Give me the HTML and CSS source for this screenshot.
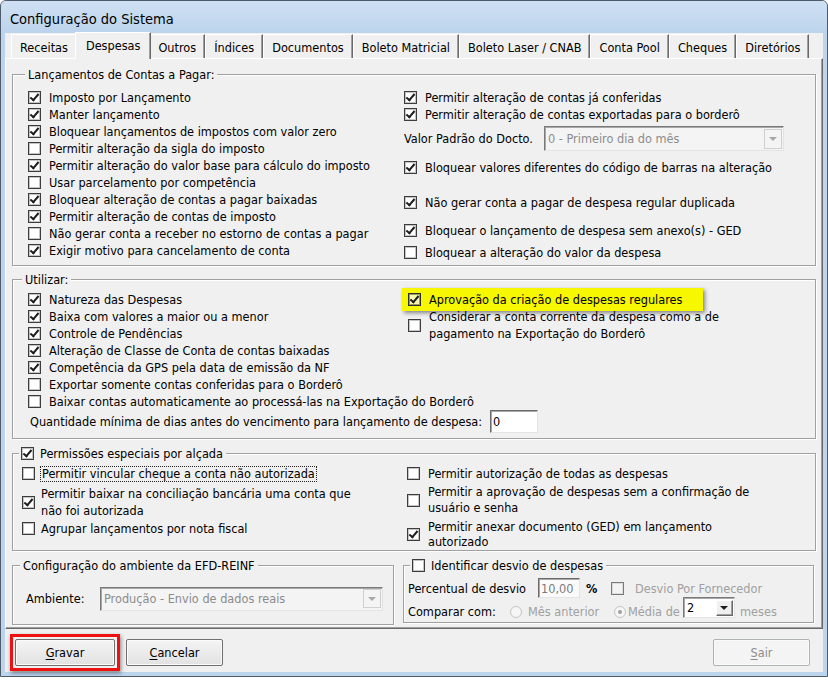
FILE: index.html
```html
<!DOCTYPE html>
<html lang="pt-BR">

<head>
    <meta charset="utf-8">
    <meta name="viewport" content="width=device-width, initial-scale=1.0">
    <title>Configuração do Sistema</title>
    <link rel="stylesheet" href="styles.css">
</head>

<body>
    <div class="window">
        <div class="titlebar">Configuração do Sistema</div>

        <div class="client">
            <nav class="tabs">
                <span class="tab">Receitas</span>
                <span class="tab active">Despesas</span>
                <span class="tab">Outros</span>
                <span class="tab">Índices</span>
                <span class="tab">Documentos</span>
                <span class="tab">Boleto Matricial</span>
                <span class="tab">Boleto Laser / CNAB</span>
                <span class="tab">Conta Pool</span>
                <span class="tab">Cheques</span>
                <span class="tab">Diretórios</span>
            </nav>

            <div class="panel">
                <!-- Lançamentos -->
                <section class="group g1">
                    <span class="legend">Lançamentos de Contas a Pagar:</span>
                    <div class="cols">
                        <div class="col c1-left">
                            <label class="row"><span class="cb on"></span>Imposto por Lançamento</label>
                            <label class="row"><span class="cb on"></span>Manter lançamento</label>
                            <label class="row"><span class="cb on"></span>Bloquear lançamentos de impostos com valor zero</label>
                            <label class="row"><span class="cb"></span>Permitir alteração da sigla do imposto</label>
                            <label class="row"><span class="cb on"></span>Permitir alteração do valor base para cálculo do imposto</label>
                            <label class="row"><span class="cb"></span>Usar parcelamento por competência</label>
                            <label class="row"><span class="cb on"></span>Bloquear alteração de contas a pagar baixadas</label>
                            <label class="row"><span class="cb on"></span>Permitir alteração de contas de imposto</label>
                            <label class="row"><span class="cb"></span>Não gerar conta a receber no estorno de contas a pagar</label>
                            <label class="row"><span class="cb on"></span>Exigir motivo para cancelamento de conta</label>
                        </div>
                        <div class="col">
                            <label class="row"><span class="cb on"></span>Permitir alteração de contas já conferidas</label>
                            <label class="row"><span class="cb on"></span>Permitir alteração de contas exportadas para o borderô</label>
                            <div class="row field-row">
                                <span class="field-label">Valor Padrão do Docto.</span>
                                <span class="select disabled wide"><span class="select-text">0 - Primeiro dia do mês</span><span class="arrow"></span></span>
                            </div>
                            <label class="row mt8"><span class="cb on"></span>Bloquear valores diferentes do código de barras na alteração</label>
                            <label class="row mt18"><span class="cb on"></span>Não gerar conta a pagar de despesa regular duplicada</label>
                            <label class="row mt11"><span class="cb on"></span>Bloquear o lançamento de despesa sem anexo(s) - GED</label>
                            <label class="row mt5"><span class="cb"></span>Bloquear a alteração do valor da despesa</label>
                        </div>
                    </div>
                </section>

                <!-- Utilizar -->
                <section class="group g2">
                    <span class="legend">Utilizar:</span>
                    <div class="cols">
                        <div class="col c2-left">
                            <label class="row"><span class="cb on"></span>Natureza das Despesas</label>
                            <label class="row"><span class="cb on"></span>Baixa com valores a maior ou a menor</label>
                            <label class="row"><span class="cb on"></span>Controle de Pendências</label>
                            <label class="row"><span class="cb on"></span>Alteração de Classe de Conta de contas baixadas</label>
                            <label class="row"><span class="cb on"></span>Competência da GPS pela data de emissão da NF</label>
                            <label class="row"><span class="cb"></span>Exportar somente contas conferidas para o Borderô</label>
                            <label class="row"><span class="cb"></span>Baixar contas automaticamente ao processá-las na Exportação do Borderô</label>
                            <div class="row qty-row">
                                <span class="qty-label">Quantidade mínima de dias antes do vencimento para lançamento de despesa:</span>
                                <span class="input">0</span>
                            </div>
                        </div>
                        <div class="col">
                            <label class="row highlight"><span class="cb on"></span>Aprovação da criação de despesas regulares</label>
                            <label class="row multi after-hl"><span class="cb"></span><span>Considerar a conta corrente da despesa como a de<br>pagamento na Exportação do Borderô</span></label>
                        </div>
                    </div>
                </section>

                <!-- Permissões -->
                <section class="group g3">
                    <span class="legend legend-cb"><span class="cb on"></span>Permissões especiais por alçada</span>
                    <div class="cols">
                        <div class="col c3-left">
                            <label class="row tight"><span class="cb"></span><span class="focus">Permitir vincular cheque a conta não autorizada</span></label>
                            <label class="row tight multi mt3"><span class="cb on"></span><span>Permitir baixar na conciliação bancária uma conta que<br>não foi autorizada</span></label>
                            <label class="row tight mt1"><span class="cb"></span>Agrupar lançamentos por nota fiscal</label>
                        </div>
                        <div class="col">
                            <label class="row"><span class="cb"></span>Permitir autorização de todas as despesas</label>
                            <label class="row multi lh16 mt2"><span class="cb"></span><span>Permitir a aprovação de despesas sem a confirmação de<br>usuário e senha</span></label>
                            <label class="row multi lh15 mt3"><span class="cb on"></span><span>Permitir anexar documento (GED) em lançamento<br>autorizado</span></label>
                        </div>
                    </div>
                </section>

                <div class="bottom-groups">
                    <section class="group g4">
                        <span class="legend">Configuração do ambiente da EFD-REINF</span>
                        <div class="row field-row">
                            <span class="amb-label">Ambiente:</span>
                            <span class="select disabled amb"><span class="select-text">Produção - Envio de dados reais</span><span class="arrow"></span></span>
                        </div>
                    </section>

                    <section class="group g5">
                        <span class="legend legend-cb"><span class="cb"></span>Identificar desvio de despesas</span>
                        <div class="row pct-row">
                            <span class="pct-label">Percentual de desvio</span>
                            <span class="input gray pct-input">10,00</span>
                            <span class="pct-sign">%</span>
                            <span class="cb off-dis"></span>
                            <span class="dis-text forn">Desvio Por Fornecedor</span>
                        </div>
                        <div class="row cmp-row">
                            <span class="cmp-label low">Comparar com:</span>
                            <span class="radio low-r"></span>
                            <span class="dis-text mes low">Mês anterior</span>
                            <span class="radio checked low-r"></span>
                            <span class="dis-text media low">Média de</span>
                            <span class="select months"><span class="select-text">2</span><span class="arrow dark"></span></span>
                            <span class="dis-text meses low">meses</span>
                        </div>
                    </section>
                </div>
            </div>

            <div class="buttons">
                <span class="mark"><span class="btn"><u>G</u>ravar</span></span>
                <span class="btn cancel"><u>C</u>ancelar</span>
                <span class="btn off sair"><u>S</u>air</span>
            </div>
        </div>
    </div>
</body>

</html>
```

FILE: styles.css
```css
body {
    margin: 0;
    padding: 0;
    background: #ffffff;
    font-family: "DejaVu Sans Condensed", "Liberation Sans", sans-serif;
    font-size: 12.6px;
    color: #000000;
}

.window {
    box-sizing: border-box;
    width: 828px;
    height: 677px;
    border: 1px solid #4d5b6b;
    border-radius: 6px 6px 0 0;
    background: #bcd4ec;
    padding: 0 4px 4px;
}

.titlebar {
    height: 32px;
    margin: 0 -4px;
    padding-left: 9px;
    line-height: 36px;
    font-size: 14.5px;
    border-radius: 5px 5px 0 0;
    background: linear-gradient(#cfe0f3, #bcd4ec);
}

.client {
    height: 639px;
    background: #f0f0f0;
    display: flex;
    flex-direction: column;
}

/* tabs */

.tabs {
    display: flex;
    align-items: flex-end;
    height: 25px;
    padding-left: 6px;
}

.tab {
    box-sizing: border-box;
    height: 24px;
    line-height: 25px;
    padding: 0 8px;
    border-top: 1px solid #ffffff;
    border-left: 1px solid #ffffff;
    border-right: 1px solid #696969;
    box-shadow: inset -1px 0 0 #a0a0a0;
    white-space: nowrap;
}

.tab.active {
    height: 27px;
    margin: 0 -2px -1px;
    padding: 0 10px;
    line-height: 26px;
    background: #f0f0f0;
    position: relative;
    z-index: 1;
}

.panel {
    box-sizing: border-box;
    height: 571px;
    border: 1px solid;
    border-color: #ffffff #696969 #696969 #ffffff;
    box-shadow: inset -1px -1px 0 #a0a0a0;
    padding: 15px 6px 0;
}

/* group boxes */

.group {
    box-sizing: border-box;
    position: relative;
    border: 1px solid #a0a0a0;
    box-shadow: inset 1px 1px 0 #ffffff, 1px 1px 0 #ffffff;
}

.legend {
    position: absolute;
    top: -9px;
    left: 12px;
    padding: 0 3px;
    line-height: 17px;
    background: #f0f0f0;
    white-space: nowrap;
}

.legend-cb {
    display: flex;
    align-items: center;
    gap: 6px;
    left: 6px;
    padding: 0 3px 0 2px;
}

.g1 {
    height: 192px;
    padding: 14px 0 0 15px;
}

.g2 {
    height: 160px;
    margin-top: 13px;
    padding: 11px 0 0 15px;
}

.g2 .legend {
    left: 9px;
}

.g3 {
    height: 98px;
    margin-top: 14px;
    padding: 11px 0 0 9px;
}

.bottom-groups {
    display: flex;
    gap: 9px;
    margin-top: 14px;
}

.g4 {
    width: 382px;
    height: 60px;
    padding: 17px 0 0 13px;
}

.g4 .legend {
    left: 7px;
}

.g5 {
    width: 411px;
    height: 58px;
    padding: 12px 0 0 4px;
}

.cols {
    display: flex;
}

.col {
    display: flex;
    flex-direction: column;
}

.c1-left {
    width: 376px;
}

.c2-left {
    width: 380px;
}

.c3-left {
    width: 385px;
}

/* rows and checkboxes */

.row {
    display: flex;
    align-items: center;
    gap: 8px;
    height: 17px;
    line-height: 17px;
    white-space: nowrap;
}

.row.multi {
    height: auto;
}

.row.tight {
    gap: 6px;
}

.lh16 {
    line-height: 16px;
}

.lh15 {
    line-height: 15px;
}

.mt1 { margin-top: 1px; }
.mt2 { margin-top: 2px; }
.mt3 { margin-top: 3px; }
.mt5 { margin-top: 5px; }
.mt8 { margin-top: 8px; }
.mt11 { margin-top: 11px; }
.mt18 { margin-top: 18px; }

.cb {
    box-sizing: border-box;
    flex: none;
    position: relative;
    width: 13px;
    height: 13px;
    border: 1px solid #3c3c3c;
    box-shadow: inset 0 0 0 1px #c4c4c4;
    background: #ffffff;
}

.cb.on::after {
    content: "";
    position: absolute;
    left: 3px;
    top: 0px;
    width: 3px;
    height: 7px;
    border: solid #1e1e1e;
    border-width: 0 2px 2px 0;
    transform: rotate(40deg);
}

.cb.off-dis {
    border-color: #7a7a7a;
    box-shadow: inset 0 0 0 1px #dcdcdc;
    background: #f4f4f4;
}

.focus {
    outline: 1px dotted #222222;
    padding: 0 1px;
    line-height: 14px;
}

.highlight {
    height: 23px;
    margin: -3px 0 0 -6px;
    padding: 0 21px 0 6px;
    background: #f7f700;
    box-shadow: 2px 2px 4px rgba(0, 0, 0, 0.45);
    align-self: flex-start;
}

.highlight .cb {
    border-color: #2e2e2e;
    box-shadow: inset 0 0 0 1px #9a9a60;
    background: #f7f7b0;
}

.after-hl {
    margin-top: -3px;
}

/* fields */

.field-row {
    height: 25px;
    margin-top: 3px;
    gap: 0;
}

.field-label {
    width: 140px;
    flex: none;
}

.select {
    box-sizing: border-box;
    flex: none;
    display: flex;
    align-items: center;
    border: 1px solid;
    border-color: #7a7a7a #e4e4e4 #e4e4e4 #7a7a7a;
    box-shadow: inset 1px 1px 0 #a8a8a8;
    background: #ffffff;
}

.select.disabled {
    background: #f4f4f4;
    color: #8c8c8c;
}

.select-text {
    flex: 1;
    padding-left: 3px;
    overflow: hidden;
}

.select.wide {
    width: 240px;
    height: 25px;
}

.select.amb {
    width: 283px;
    height: 24px;
}

.arrow {
    box-sizing: border-box;
    flex: none;
    position: relative;
    width: 18px;
    height: calc(100% - 3px);
    margin-right: 1px;
    border: 1px solid #d0d0d0;
    background: #f4f4f4;
}

.arrow::after {
    content: "";
    position: absolute;
    left: 4px;
    top: 50%;
    margin-top: -2px;
    border-left: 4px solid transparent;
    border-right: 4px solid transparent;
    border-top: 4px solid #a8a8a8;
}

.arrow.dark {
    width: 17px;
    border-color: #ffffff #696969 #696969 #ffffff;
    box-shadow: inset -1px -1px 0 #a0a0a0;
    background: #f0f0f0;
}

.arrow.dark::after {
    left: 3px;
    border-top-color: #1e1e1e;
}

.input {
    box-sizing: border-box;
    flex: none;
    display: inline-flex;
    align-items: center;
    padding-left: 2px;
    border: 1px solid;
    border-color: #6a6a6a #e4e4e4 #e4e4e4 #6a6a6a;
    box-shadow: inset 1px 1px 0 #a8a8a8;
    background: #ffffff;
}

.qty-row {
    height: 23px;
    gap: 0;
    padding-left: 2px;
}

.qty-label {
    width: 460px;
    flex: none;
}

.qty-row .input {
    width: 48px;
    height: 23px;
}

.amb-label {
    width: 74px;
    flex: none;
}

.pct-row {
    height: 20px;
    gap: 0;
}

.pct-label {
    width: 130px;
    flex: none;
}

.pct-input {
    width: 42px;
    height: 20px;
    color: #7a7a7a;
    background: #fafafa;
}

.pct-sign {
    width: 31px;
    flex: none;
    padding-left: 6px;
    box-sizing: border-box;
    font-weight: bold;
}

.dis-text {
    color: #a0a0a0;
}

.forn {
    margin-left: 11px;
}

.cmp-row {
    height: 21px;
    margin-top: -1px;
    gap: 0;
}

.low {
    padding-top: 8px;
}

.low-r {
    margin-top: 8px;
}

.cmp-label {
    width: 102px;
    flex: none;
}

.radio {
    box-sizing: border-box;
    flex: none;
    position: relative;
    width: 12px;
    height: 12px;
    border-radius: 50%;
    border: 1px solid #c4c4c4;
    background: #f6f6f6;
}

.radio.checked::after {
    content: "";
    position: absolute;
    left: 3px;
    top: 3px;
    width: 4px;
    height: 4px;
    border-radius: 50%;
    background: #a0a0a0;
}

.mes {
    width: 86px;
    flex: none;
    margin-left: 6px;
}

.media {
    width: 55px;
    flex: none;
    margin-left: 2px;
}

.select.months {
    width: 52px;
    height: 21px;
}

.meses {
    margin-left: 5px;
}

/* buttons */

.buttons {
    display: flex;
    align-items: flex-start;
    padding: 5px 0 0 5px;
    flex: 1;
}

.mark {
    display: inline-flex;
    padding: 2px;
    border: 3px solid #ee1111;
    box-shadow: 1px 2px 4px rgba(0, 0, 0, 0.45);
}

.btn {
    box-sizing: border-box;
    display: inline-flex;
    align-items: center;
    justify-content: center;
    width: 100px;
    height: 27px;
    border: 1px solid #707070;
    border-radius: 2px;
    box-shadow: inset 0 0 0 1px #fbfbfb;
    background: linear-gradient(#f4f4f4, #e2e2e2);
}

.btn u {
    text-decoration-thickness: 1px;
    text-underline-offset: 2px;
}

.cancel {
    margin: 5px 0 0 6px;
    width: 97px;
}

.sair {
    margin: 5px 13px 0 auto;
    width: 97px;
}

.btn.off {
    border-color: #adb2b5;
    color: #8d8d8d;
    background: #f4f4f4;
}
```
